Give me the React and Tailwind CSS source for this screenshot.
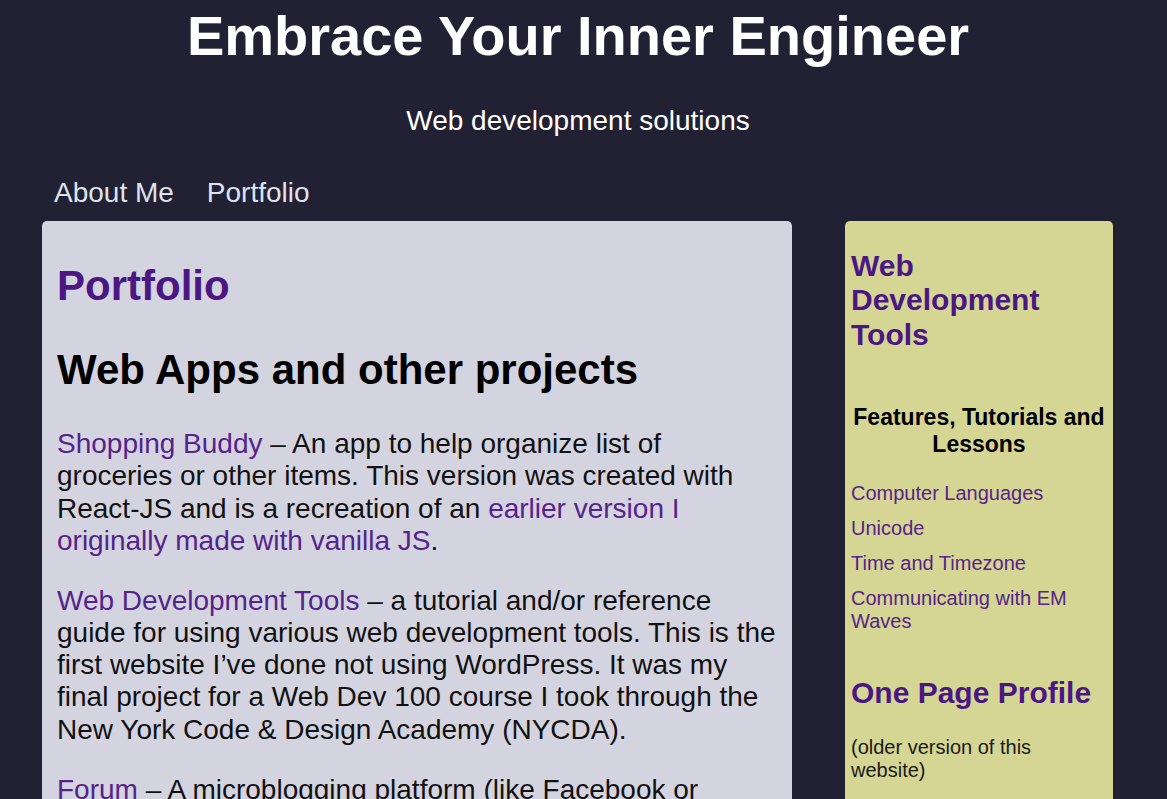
import React from "react";

const toolLinks = [
  "Computer Languages",
  "Unicode",
  "Time and Timezone",
  "Communicating with EM Waves",
];

const App = () => {
  return (
    <div className="min-h-[799px] bg-[#222133] font-['Liberation_Sans',Arial,sans-serif] text-[#111]">
      <header className="text-center pt-[4px] pr-[11px]">
        <h1 className="text-[56px] leading-[1.149] font-bold text-white">
          Embrace Your Inner Engineer
        </h1>
        <p className="mt-[37px] text-[28px] leading-[1.149] text-white">
          Web development solutions
        </p>
      </header>

      <nav className="mt-[39px] flex gap-[33px] pl-[54px] text-[28px] leading-[1.149] text-[#dde4ef]">
        <a href="#">About Me</a>
        <a href="#">Portfolio</a>
      </nav>

      <div className="mt-[12px] flex items-start pl-[42px]">
        <main className="w-[750px] rounded-[5px] bg-[#d4d4e0] px-[15px] pt-[41px] pb-8">
          <h2 className="text-[42px] leading-[1.149] font-bold text-[#4b1782]">
            Portfolio
          </h2>
          <h3 className="mt-[36px] text-[42px] leading-[1.149] font-bold text-black">
            Web Apps and other projects
          </h3>
          <div className="mt-[34px] text-[28px] leading-[1.149] text-[#111]">
            <p>
              <a href="#" className="text-[#55238a]">Shopping Buddy</a> – An app to
              help organize list of groceries or other items. This version was
              created with React-JS and is a recreation of an{" "}
              <a href="#" className="text-[#55238a]">
                earlier version I originally made with vanilla JS
              </a>
              .
            </p>
            <p className="mt-[28px]">
              <a href="#" className="text-[#55238a]">Web Development Tools</a> – a
              tutorial and/or reference guide for using various web development
              tools. This is the first website I’ve done not using WordPress. It
              was my final project for a Web Dev 100 course I took through the New
              York Code &amp; Design Academy (NYCDA).
            </p>
            <p className="mt-[28px]">
              <a href="#" className="text-[#55238a]">Forum</a> – A microblogging
              platform (like Facebook or Twitter) where users can post and reply.
            </p>
          </div>
        </main>

        <aside className="ml-[53px] w-[268px] rounded-[5px] bg-[#d5d694] px-[6px] pt-[28px] pb-8">
          <h2 className="text-[30px] leading-[1.149] font-bold text-[#4b1782]">
            Web Development Tools
          </h2>
          <h3 className="mt-[52px] text-center text-[23px] leading-[1.149] font-bold text-black">
            Features, Tutorials and Lessons
          </h3>
          <ul className="mt-[25px] flex flex-col gap-[12px] text-[20px] leading-[1.149]">
            {toolLinks.map((item) => (
              <li key={item}>
                <a href="#" className="text-[#55238a]">{item}</a>
              </li>
            ))}
          </ul>
          <h2 className="mt-[43px] text-[30px] leading-[1.149] font-bold text-[#4b1782]">
            One Page Profile
          </h2>
          <p className="mt-[26px] text-[20px] leading-[1.149] text-[#1a1a1a]">
            (older version of this website)
          </p>
        </aside>
      </div>
    </div>
  );
};

export default App;
